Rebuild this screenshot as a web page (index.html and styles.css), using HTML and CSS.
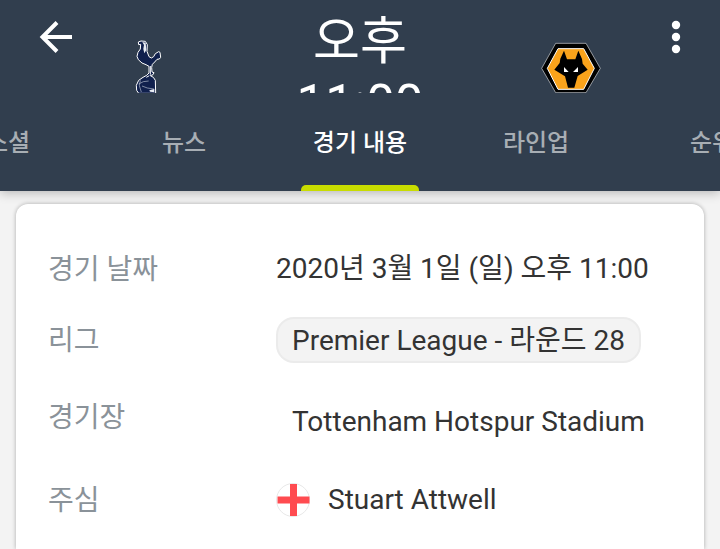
FILE: index.html
```html
<!DOCTYPE html>
<html lang="ko">
<head>
<meta charset="utf-8">
<meta name="viewport" content="width=device-width, initial-scale=1">
<title>경기 내용</title>
<link rel="stylesheet" href="styles.css">
</head>
<body>
<header class="header">
  <div class="hero">
    <button class="icon-button" type="button" aria-label="뒤로">
      <svg class="icon" viewBox="0 0 48 48" aria-hidden="true"><path d="M40 24H11M25 9.500 10.500 24l14.500 14.500" fill="none" stroke="#fff" stroke-width="4"/></svg>
    </button>
    <div class="team">
      <svg class="crest crest-home" viewBox="0 0 168 210" role="img" aria-label="Tottenham">
        <path d="M56 44 55 36 63 33 76 34 82 44 81 64 87 80 94 84 101 80 106 71 116 65 120 67 122 82 118 87 111 88 104 96 97 103 95 112 96 126 102 128 99 134 91 137 100 142 106 151 107 190 56 190 50 181 49 166 56 151 69 142 80 136 87 129 87 109 78 104 66 99 55 89 51 79 54 67 61 57 62 43Z" fill="#10204d" stroke="#fff" stroke-width="3" stroke-linejoin="round"/>
        <path d="M67 36 77 38 79 60 73 70 70 57 72 45Z" fill="#e9edf3"/>
        <path d="M91 108V134M88 137l-9 5" stroke="#fff" stroke-width="3" fill="none"/>
        <path d="M61 151l-3 16 6 19M56 162l14-7 16-2M66 168l16 6 20 3" stroke="#b7bfce" stroke-width="2" fill="none"/>
        <path d="M88 181l15-4v10l-13-2Z" fill="#e9edf3"/>
      </svg>
    </div>
    <div class="kickoff">오후 11:00</div>
    <div class="team">
      <svg class="crest crest-away" viewBox="6 0 240 225" role="img" aria-label="Wolverhampton">
        <path d="M77 40H168L211 115 168 188H77L35 115Z" fill="#000" stroke="#d5d8dc" stroke-width="2"/>
        <path d="M84 56H161L193 115 161 178H84L52 115Z" fill="#faa31b" stroke="#fff" stroke-width="3"/>
        <path d="M102 62 111 88H136L145 62 156 87 158 101 173 119 143 138 133 173H114L105 139 73 119 89 99 91 86Z" fill="#000"/>
        <path d="M102 111 116 126H102ZM144 111V126H129Z" fill="#fff"/>
      </svg>
    </div>
    <button class="icon-button icon-button-end" type="button" aria-label="메뉴">
      <svg class="icon" viewBox="0 0 48 48" aria-hidden="true" fill="#fff"><circle cx="24" cy="12" r="4.200"/><circle cx="24" cy="24" r="4.200"/><circle cx="24" cy="36" r="4.200"/></svg>
    </button>
  </div>
  <nav class="tabs">
    <a class="tab" href="#social">소셜</a>
    <a class="tab" href="#news">뉴스</a>
    <a class="tab tab-active" href="#match" aria-current="page">경기 내용</a>
    <a class="tab" href="#lineup">라인업</a>
    <a class="tab" href="#table">순위</a>
  </nav>
</header>
<main class="content">
  <dl class="card">
    <div class="row">
      <dt class="label">경기 날짜</dt>
      <dd class="value">2020년 3월 1일 (일) 오후 11:00</dd>
    </div>
    <div class="row">
      <dt class="label">리그</dt>
      <dd class="value"><a class="chip" href="#league">Premier League - 라운드 28</a></dd>
    </div>
    <div class="row row-tall">
      <dt class="label">경기장</dt>
      <dd class="value value-venue">Tottenham Hotspur Stadium</dd>
    </div>
    <div class="row row-tall">
      <dt class="label">주심</dt>
      <dd class="value value-person">
        <svg class="flag" viewBox="0 0 34 34" role="img" aria-label="England"><circle cx="17" cy="17" r="16.500" fill="#fff" stroke="#e8e8e8"/><path d="M14 1h7v12.500h12.500v7h-12.500v12.500h-7v-12.500H1.500v-7h12.500Z" fill="#ff4b50"/></svg>
        Stuart Attwell
      </dd>
    </div>
  </dl>
</main>
</body>
</html>
```
FILE: styles.css
```css
* {
  box-sizing: border-box;
}

body {
  margin: 0;
  min-height: 100vh;
  display: flex;
  flex-direction: column;
  background: #f3f3f3;
  color: #333;
  font-family: Roboto, "Noto Sans CJK KR", sans-serif;
  font-size: 28px;
  line-height: 32px;
}

.header {
  position: relative;
  background: #313e4e;
  color: #fff;
  box-shadow: 0 2px 10px rgba(0, 0, 0, 0.25);
}

.hero {
  display: grid;
  grid-template-columns: 48px 17fr 36fr 17fr 60px;
  height: 93px;
  padding: 0 20px 0 32px;
  overflow: hidden;
}

.icon-button {
  display: flex;
  height: 48px;
  margin: 13px 0 0;
  padding: 0;
  border: 0;
  background: none;
}

.icon-button-end {
  justify-content: flex-end;
}

.icon {
  width: 48px;
  height: 48px;
}

.team {
  display: flex;
  justify-content: center;
  align-items: flex-start;
  padding-top: 30px;
}

.crest {
  flex: none;
}

.crest-home {
  width: 56px;
  height: 70px;
}

.crest-away {
  width: 80px;
  height: 75px;
}

.kickoff {
  width: 140px;
  margin: 0 auto;
  padding-top: 11px;
  font-size: 51px;
  line-height: 62px;
  text-align: center;
}

.tabs {
  display: flex;
  justify-content: center;
  overflow: hidden;
}

.tab {
  position: relative;
  flex: none;
  width: 176px;
  height: 98px;
  color: #a8aeb4;
  font-size: 24px;
  font-weight: 500;
  line-height: 100px;
  text-align: center;
  text-decoration: none;
}

.tab-active {
  color: #fff;
}

.tab-active::after {
  content: "";
  position: absolute;
  right: 29px;
  bottom: 0;
  left: 29px;
  height: 6px;
  border-radius: 5px 5px 0 0;
  background: #c8dc00;
}

.content {
  display: flex;
  flex: 1;
  padding: 13px 16px 0;
}

.card {
  flex: 1;
  margin: 0;
  padding: 29px 32px 0;
  border-radius: 12px 12px 0 0;
  background: #fff;
  box-shadow: 0 0 4px rgba(0, 0, 0, 0.3);
}

.row {
  display: grid;
  grid-template-columns: 228px 1fr;
  align-items: center;
  min-height: 71px;
}

.row-tall {
  min-height: 83px;
}

.label {
  padding-top: 2px;
  color: #8a9299;
}

.value {
  margin: 0;
  white-space: nowrap;
}

.chip {
  display: block;
  width: fit-content;
  padding: 6px 14px 4px;
  border: 2px solid #ebebeb;
  border-radius: 18px;
  background: #f3f3f3;
  color: inherit;
  text-decoration: none;
}

.value-venue {
  padding: 10px 16px 0;
}

.value-person {
  display: flex;
  align-items: center;
  gap: 18px;
}

.flag {
  width: 34px;
  height: 34px;
}
```
